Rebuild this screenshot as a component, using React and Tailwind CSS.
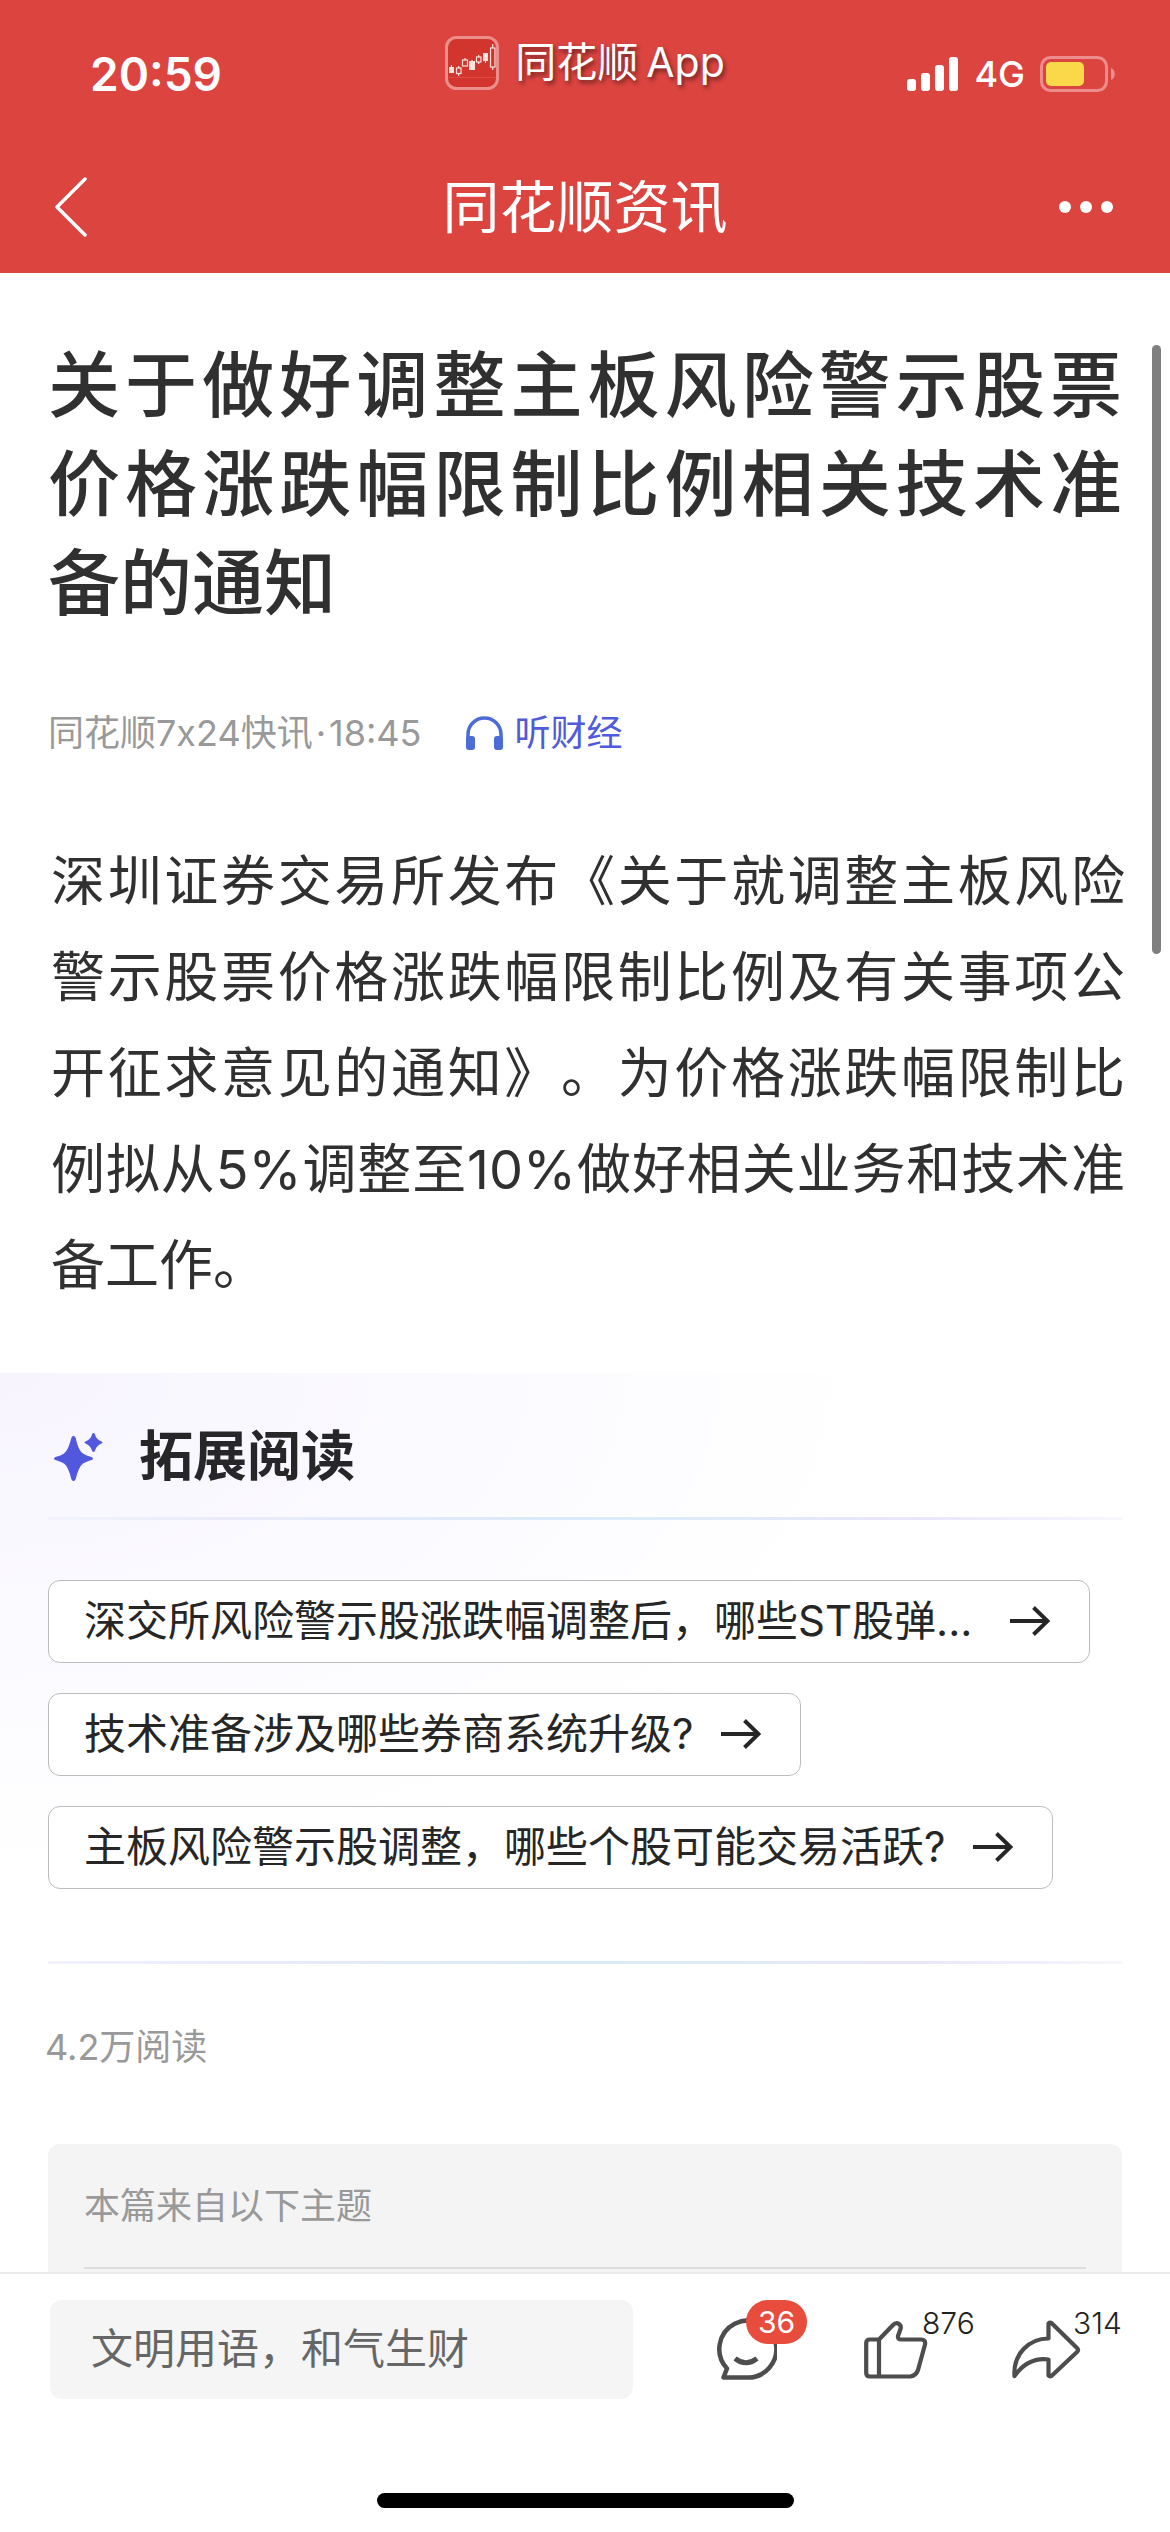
const questions = [
  { text: '深交所风险警示股涨跌幅调整后，哪些ST股弹...', width: 'w-[1042px]' },
  { text: '技术准备涉及哪些券商系统升级?', width: '' },
  { text: '主板风险警示股调整，哪些个股可能交易活跃?', width: '' },
];

function AppLogo() {
  return (
    <svg className="h-[54px] w-[54px]" viewBox="0 0 54 54" fill="none" aria-hidden="true">
      <rect x="1.5" y="1.5" width="51" height="51" rx="10" fill="#d2352e" stroke="#ea8f8b" strokeWidth="3" />
      <path d="M3 41.500H51" stroke="#dd4a45" strokeWidth="1" />
      <g fill="#fbe3dc">
        <rect x="4" y="31" width="5" height="6" />
        <rect x="24" y="25" width="6" height="9" />
        <rect x="38" y="17" width="5" height="8" />
      </g>
      <g stroke="#fbe3dc" strokeWidth="1.2">
        <rect x="11.500" y="32" width="4.500" height="5.500" />
        <rect x="17.500" y="24" width="5" height="6" />
        <rect x="31.500" y="21" width="4.500" height="5" />
        <rect x="45.500" y="12" width="4.500" height="19" />
        <path d="M6.500 29v2M13.700 30v2M13.700 37.500v2.500M20 22v2M27 24v1M33.700 19v2M33.700 26v2M40.500 25v2M47.700 8v4M47.700 31v3" />
      </g>
    </svg>
  );
}

function Signal() {
  return (
    <svg className="h-[34px] w-[52px]" viewBox="0 0 52 34" fill="#fff" aria-hidden="true">
      <rect x="0" y="22" width="9" height="12" rx="3" />
      <rect x="14" y="16" width="9" height="18" rx="3" />
      <rect x="28" y="8" width="9" height="26" rx="3" />
      <rect x="42" y="0" width="9" height="34" rx="3" />
    </svg>
  );
}

function Battery() {
  return (
    <svg className="h-9 w-[76px]" viewBox="0 0 76 36" fill="none" aria-hidden="true">
      <rect x="1.500" y="1.500" width="65" height="33" rx="9" stroke="#ee8d8d" strokeWidth="3" />
      <rect x="6" y="6" width="38" height="24" rx="5" fill="#f9d84a" />
      <path d="M71 12c5 1.500 5 10.500 0 12z" fill="#ee8d8d" />
    </svg>
  );
}

function Sparkle() {
  return (
    <svg className="h-12 w-[49px]" viewBox="0 0 49 48" fill="#5258de" aria-hidden="true">
      <path d="M19.500 3Q21.200 3 21.700 5Q24.500 18 29 20.500Q32 22.500 37.500 24Q39 24.500 39 25.500Q39 26.500 37.500 27Q32 28.500 29 30.500Q24.500 34 21.700 46Q21.200 48 19.500 48Q17.800 48 17.300 46Q14.500 34 10 30.500Q7 28.500 1.500 27Q0 26.500 0 25.500Q0 24.500 1.500 24Q7 22.500 10 20.500Q14.500 17 17.300 5Q17.800 3 19.500 3Z" />
      <path d="M39.500 0Q40.500 0 40.800 1Q42.300 6.500 47.500 8.500Q48.500 8.900 48.500 9.500Q48.500 10.100 47.500 10.500Q42.300 12.500 40.800 18Q40.500 19 39.500 19Q38.500 19 38.200 18Q36.700 12.500 31.500 10.500Q30.500 10.100 30.500 9.500Q30.500 8.900 31.500 8.500Q36.700 6.500 38.200 1Q38.500 0 39.500 0Z" />
    </svg>
  );
}

function Divider() {
  return <div className="h-[3px] bg-[linear-gradient(90deg,#f1f2fc,#e9ebfa_18%,#dbeaf8_45%,#dcebf7_60%,#ebe6fa_82%,#f8f6fd)]" />;
}

export default function App() {
  return (
    <div className="flex h-screen flex-col overflow-hidden bg-white font-[Inter,'Noto_Sans_CJK_SC',sans-serif] text-[#303030] [text-spacing-trim:space-all]" lang="zh-CN">
      <header className="bg-[#dc4440] text-white">
        <div className="grid h-[141px] grid-cols-[1fr_auto_1fr] items-center px-[54px]">
          <time className="pt-[7px] pl-9 text-[46px] leading-none font-semibold">20:59</time>
          <div className="-mt-4 flex items-center gap-4">
            <AppLogo />
            <span className="flex items-center gap-2 text-[41px] leading-none [text-shadow:2px_3px_4px_#00000080]">
              <span>同花顺</span>
              <span>App</span>
            </span>
          </div>
          <div className="flex items-center justify-end gap-[15px] pt-[7px]">
            <Signal />
            <span className="text-[36px] leading-none font-medium">4G</span>
            <Battery />
          </div>
        </div>
        <div className="grid h-[132px] grid-cols-[1fr_auto_1fr] items-center px-[54px]">
          <button aria-label="返回" className="justify-self-start">
            <svg className="h-[60px] w-[34px]" viewBox="0 0 34 60" fill="none" aria-hidden="true">
              <path d="M31 2L3 30L31 58" stroke="#fff" strokeWidth="3.500" strokeLinecap="round" strokeLinejoin="round" />
            </svg>
          </button>
          <span className="text-[57px] leading-none">同花顺资讯</span>
          <button aria-label="更多" className="justify-self-end">
            <svg className="h-3 w-[58px]" viewBox="0 0 58 12" fill="#fff" aria-hidden="true">
              <circle cx="7" cy="6" r="6" />
              <circle cx="28" cy="6" r="6" />
              <circle cx="49" cy="6" r="6" />
            </svg>
          </button>
        </div>
      </header>

      <main className="relative min-h-0 flex-1 overflow-hidden">
        <article className="px-12 pt-[62px]">
          <h1 className="text-justify text-[72px] leading-[99px] font-medium">关于做好调整主板风险警示股票价格涨跌幅限制比例相关技术准备的通知</h1>
          <div className="mt-[74px] flex h-[54px] items-center gap-11 text-[36px] leading-none text-[#999]">
            <p>
              同花顺7x24快讯<span className="mx-[3px]">·</span>18:45
            </p>
            <button className="flex items-center gap-3 text-[#4f5bdb]">
              <svg className="h-[34px] w-[37px]" viewBox="0 0 37 34" fill="none" aria-hidden="true">
                <path d="M2 24V18.500a16.500 16.500 0 0 1 33 0V24" stroke="#4b6bd6" strokeWidth="3.500" />
                <rect x="0" y="20" width="9" height="14" rx="3" fill="#4b6bd6" />
                <rect x="28" y="20" width="9" height="14" rx="3" fill="#4b6bd6" />
              </svg>
              听财经
            </button>
          </div>
          <p className="mt-[74px] -mr-[3px] ml-[3px] text-justify text-[54px] leading-[96px]">
            深圳证券交易所发布《关于就调整主板风险警示股票价格涨跌幅限制比例及有关事项公开征求意见的通知》。为价格涨跌幅限制比例拟从5%调整至10%做好相关业务和技术准备工作。
          </p>
        </article>

        <section className="mt-[59px] bg-[radial-gradient(ellipse_75%_85%_at_0_0,#f7f4fe,#fbfaff_50%,#ffffff)] px-12 pt-12">
          <h2 className="flex h-[72px] items-center gap-9 pl-[6px] text-[54px] leading-none font-bold text-[#27272a]">
            <Sparkle />
            拓展阅读
          </h2>
          <div className="mt-6">
            <Divider />
          </div>
          <ul className="mt-[60px] mb-[72px] flex flex-col items-start gap-[30px] text-[42px] leading-none text-[#262626]">
            {questions.map((q) => (
              <li key={q.text} className="flex max-w-full">
                <button className={`flex h-[83px] max-w-full items-center justify-between gap-7 rounded-xl border border-[#bcbcbf] bg-white pr-[39px] pb-[2px] pl-[35px] whitespace-nowrap ${q.width}`}>
                  <span>{q.text}</span>
                  <svg className="h-8 w-10 shrink-0" viewBox="0 0 40 32" fill="none" stroke="#262626" strokeWidth="4" aria-hidden="true">
                    <path d="M0 16H37M23.500 2.500L37.500 16L23.500 29.500" />
                  </svg>
                </button>
              </li>
            ))}
          </ul>
          <Divider />
        </section>

        <p className="mt-14 px-[45px] text-[36px] leading-[54px] text-[#999]">4.2万阅读</p>

        <section className="mx-12 mt-[70px] h-[300px] rounded-xl bg-[#f4f4f4] px-9 pt-[35px]">
          <h3 className="border-b-2 border-[#dedede] pb-[34px] text-[36px] leading-[54px] text-[#999]">本篇来自以下主题</h3>
        </section>

        <div className="absolute top-[72px] right-[9px] h-[609px] w-[9px] rounded-full bg-[#7f7f7f]" />
      </main>

      <footer className="border-t-2 border-[#ebebeb] bg-white">
        <div className="flex items-start pt-[26px] pl-[50px]">
          <input
            aria-label="评论"
            placeholder="文明用语，和气生财"
            className="h-[99px] min-w-0 flex-1 rounded-xl bg-[#f5f5f5] px-[41px] pb-[2px] text-[42px] placeholder:text-[#666] placeholder:opacity-100"
          />
          <div className="flex shrink-0 items-start pt-[18px] pl-[82px] text-[30px] leading-none font-light text-[#222]">
            <button aria-label="评论 36" className="relative h-[62px] w-[149px]">
              <svg className="h-[62px] w-[62px]" viewBox="0 0 62 62" fill="none" stroke="#4d4d4d" strokeWidth="4.500" strokeLinejoin="round" aria-hidden="true">
                <path d="M8.500 59.500H31A28.500 28.500 0 1 0 12 50.500Z" />
                <path d="M20 40.500Q31 49 42 40.500" strokeWidth="5" />
              </svg>
              <span className="absolute -top-[18px] left-[31px] flex h-11 w-[61px] items-center justify-center rounded-full bg-[#e84c3d] font-normal text-white">36</span>
            </button>
            <button aria-label="点赞 876" className="relative h-[62px] w-[148px]">
              <svg className="mt-[2px] h-[58px] w-[64px]" viewBox="0 0 64 58" fill="none" stroke="#4d4d4d" strokeWidth="4.200" strokeLinejoin="round" aria-hidden="true">
                <path d="M15 18.500L29 4Q32 1 35 3Q37.500 5 36.500 8L34 15Q33.500 18.500 37 18.500H57Q62 18.500 61 23.500L54 49Q52 55 46 55.500H6Q2.200 55.500 2.200 52V22Q2.200 18.500 6 18.500Z" />
                <path d="M15 18.500V55.500" />
              </svg>
              <span className="absolute -top-[10px] left-[58px]">876</span>
            </button>
            <button aria-label="分享 314" className="relative h-[62px] w-[158px]">
              <svg className="mt-[1px] h-[59px] w-[69px]" viewBox="0 0 69 59" fill="none" stroke="#4d4d4d" strokeWidth="4.200" strokeLinejoin="round" aria-hidden="true">
                <path d="M36.500 3.500Q38 2 40 3.500L65 28Q67 30 65 32L40 55.500Q38 57 36.500 55.500V39.500Q16 37 2.500 56C1 34 17 18.500 36.500 18.500Z" />
              </svg>
              <span className="absolute -top-[10px] left-[61px]">314</span>
            </button>
          </div>
        </div>
        <div className="mx-auto mt-[94px] mb-6 h-[15px] w-[417px] rounded-full bg-black" />
      </footer>
    </div>
  );
}
